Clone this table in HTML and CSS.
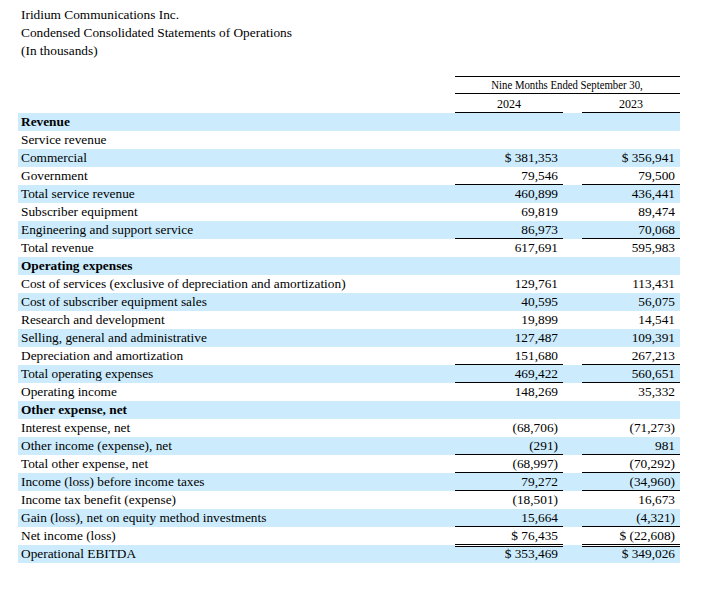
FILE: index.html
```html
<!DOCTYPE html>
<html>
<head>
<meta charset="utf-8">
<link rel="stylesheet" href="styles.css">
</head>
<body>
<div class="page">
  <div class="title">
    <div>Iridium Communications Inc.</div>
    <div>Condensed Consolidated Statements of Operations</div>
    <div>(In thousands)</div>
  </div>
  <table class="fin">
    <colgroup>
      <col class="c-label"><col class="c-a"><col class="c-gap"><col class="c-b">
    </colgroup>
    <thead>
      <tr>
        <th></th>
        <th colspan="3" class="period"><span class="narrow">Nine Months Ended September 30,</span></th>
      </tr>
      <tr class="yr-row">
        <th></th>
        <th class="year">2024</th>
        <th></th>
        <th class="year">2023</th>
      </tr>
    </thead>
    <tbody>
      <tr class="alt"><td class="sec">Revenue</td><td></td><td></td><td></td></tr>
      <tr><td>Service revenue</td><td></td><td></td><td></td></tr>
      <tr class="alt"><td>Commercial</td><td class="num">$ 381,353</td><td></td><td class="num">$ 356,941</td></tr>
      <tr><td>Government</td><td class="num ul">79,546</td><td></td><td class="num ul">79,500</td></tr>
      <tr class="alt"><td>Total service revenue</td><td class="num">460,899</td><td></td><td class="num">436,441</td></tr>
      <tr><td>Subscriber equipment</td><td class="num">69,819</td><td></td><td class="num">89,474</td></tr>
      <tr class="alt"><td>Engineering and support service</td><td class="num ul">86,973</td><td></td><td class="num ul">70,068</td></tr>
      <tr><td>Total revenue</td><td class="num">617,691</td><td></td><td class="num">595,983</td></tr>
      <tr class="alt"><td class="sec">Operating expenses</td><td></td><td></td><td></td></tr>
      <tr><td>Cost of services (exclusive of depreciation and amortization)</td><td class="num">129,761</td><td></td><td class="num">113,431</td></tr>
      <tr class="alt"><td>Cost of subscriber equipment sales</td><td class="num">40,595</td><td></td><td class="num">56,075</td></tr>
      <tr><td>Research and development</td><td class="num">19,899</td><td></td><td class="num">14,541</td></tr>
      <tr class="alt"><td>Selling, general and administrative</td><td class="num">127,487</td><td></td><td class="num">109,391</td></tr>
      <tr><td>Depreciation and amortization</td><td class="num ul">151,680</td><td></td><td class="num ul">267,213</td></tr>
      <tr class="alt"><td>Total operating expenses</td><td class="num ul">469,422</td><td></td><td class="num ul">560,651</td></tr>
      <tr><td>Operating income</td><td class="num">148,269</td><td></td><td class="num">35,332</td></tr>
      <tr class="alt"><td class="sec">Other expense, net</td><td></td><td></td><td></td></tr>
      <tr><td>Interest expense, net</td><td class="num">(68,706)</td><td></td><td class="num">(71,273)</td></tr>
      <tr class="alt"><td>Other income (expense), net</td><td class="num ul">(291)</td><td></td><td class="num ul">981</td></tr>
      <tr><td>Total other expense, net</td><td class="num ul">(68,997)</td><td></td><td class="num ul">(70,292)</td></tr>
      <tr class="alt"><td>Income (loss) before income taxes</td><td class="num ul">79,272</td><td></td><td class="num ul">(34,960)</td></tr>
      <tr><td>Income tax benefit (expense)</td><td class="num">(18,501)</td><td></td><td class="num">16,673</td></tr>
      <tr class="alt"><td>Gain (loss), net on equity method investments</td><td class="num ul">15,664</td><td></td><td class="num ul">(4,321)</td></tr>
      <tr><td>Net income (loss)</td><td class="num ul">$ 76,435</td><td></td><td class="num ul">$ (22,608)</td></tr>
      <tr class="alt"><td>Operational EBITDA</td><td class="num dul">$ 353,469</td><td></td><td class="num dul">$ 349,026</td></tr>
    </tbody>
  </table>
</div>
</body>
</html>
```
FILE: styles.css
```css
html, body {
  margin: 0;
  padding: 0;
  background: #fff;
}
body {
  font-family: "Liberation Serif", "Times New Roman", serif;
  font-size: 13.33px;
  color: #000;
}
.page {
  padding: 6px 0 0 18px;
}
.title {
  padding-left: 3px;
  line-height: 18px;
}
.fin {
  margin-top: 16px;
  border-collapse: separate;
  border-spacing: 0;
  table-layout: fixed;
  width: 662px;
}
.c-label { width: 437px; }
.c-a { width: 108px; }
.c-gap { width: 19px; }
.c-b { width: 98px; }
.fin th, .fin td {
  height: 18px;
  padding: 0;
  line-height: 18px;
  white-space: nowrap;
  vertical-align: middle;
}
.fin .yr-row th {
  height: 19px;
}
.fin th {
  font-weight: normal;
  text-align: center;
  font-size: 12.5px;
}
.fin .year {
  font-size: 12px;
}
.narrow {
  display: inline-block;
  transform: scaleX(0.86);
}
.fin td:first-child {
  padding-left: 3px;
}
.period {
  box-shadow: inset 0 1px 0 #000, inset 0 -1px 0 #000;
}
.year {
  box-shadow: inset 0 -1px 0 #000;
}
.alt td {
  background: #ccecfd;
}
.sec {
  font-weight: bold;
}
.num {
  text-align: right;
  padding-right: 5px !important;
}
.ul {
  box-shadow: inset 0 -1px 0 #000;
}
.dul {
  box-shadow: inset 0 1px 0 #fff, inset 0 2px 0 #000;
}
```
